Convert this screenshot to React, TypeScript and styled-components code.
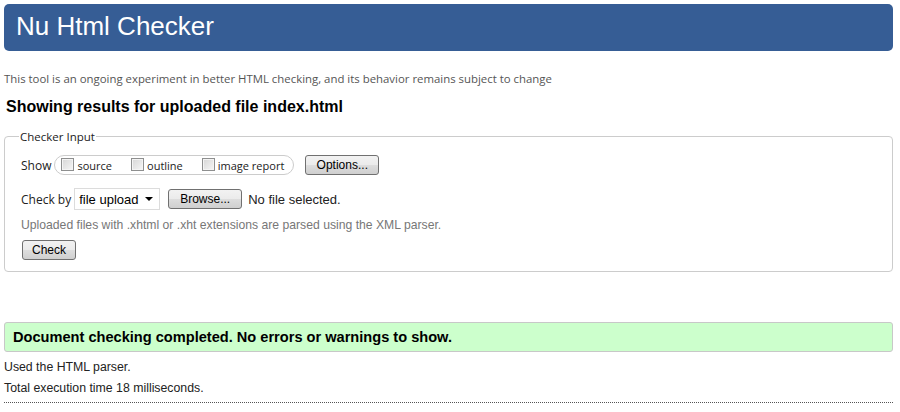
import React from "react";
import styled, { createGlobalStyle } from "styled-components";

const Global = createGlobalStyle`
  html, body { margin: 0; padding: 0; background: #fff; }
  body { font-family: "Liberation Sans", Arial, sans-serif; color: #000; }
`;

const Page = styled.div`
  padding: 4px 7px 0 4px;
  display: flex;
  flex-direction: column;
`;

const Header = styled.h1`
  margin: 0;
  height: 47px;
  background: #365d95;
  border-radius: 5px;
  color: #fff;
  font: 400 26px "Liberation Sans", Arial, sans-serif;
  display: flex;
  align-items: center;
  padding: 0 0 2px 12px;
  box-sizing: border-box;
`;

const Notice = styled.p`
  margin: 20px 0 0 0;
  font: 400 11.4px "Open Sans", sans-serif;
  color: #555;
  line-height: 16px;
`;

const Title = styled.h2`
  margin: 10px 0 0 2px;
  font: 700 16px "Liberation Sans", Arial, sans-serif;
  line-height: 20px;
`;

const Fieldset = styled.fieldset`
  margin: 12px 0 0 0;
  border: 1px solid #ccc;
  border-radius: 4px;
  padding: 4px 16px 11px 16px;
  display: flex;
  flex-direction: column;
`;

const Legend = styled.legend`
  font: 400 11.5px "Open Sans", sans-serif;
  color: #222;
  padding: 0 1px;
  margin-left: -2px;
`;

const Row = styled.div<{ $mt?: number }>`
  display: flex;
  align-items: center;
  margin-top: ${(p) => p.$mt ?? 0}px;
  font-size: 12px;
`;

const Label = styled.span<{ $font?: string; $ml?: number; $size?: number }>`
  font: 400 ${(p) => p.$size ?? 12}px ${(p) => p.$font ?? `"Liberation Sans", Arial, sans-serif`};
  color: #222;
  margin-left: ${(p) => p.$ml ?? 0}px;
`;

const Pill = styled.div`
  display: flex;
  align-items: center;
  gap: 19px;
  margin-left: 3px;
  height: 20px;
  padding: 0 9px 0 6px;
  border: 1px solid #ccc;
  border-radius: 10px;
  box-sizing: border-box;
`;

const CheckItem = styled.label`
  display: flex;
  align-items: center;
  gap: 3px;
  font: 400 11px "Open Sans", sans-serif;
  color: #222;
`;

const Box = styled.span`
  width: 13px;
  height: 13px;
  border: 1px solid #8e8f8f;
  background: linear-gradient(135deg, #d6d6d6, #f6f6f6);
  box-shadow: inset 0 0 0 1px #f4f4f4;
  box-sizing: border-box;
  display: inline-block;
  margin-bottom: 2px;
`;

const Button = styled.button<{ $w: number; $ml?: number }>`
  width: ${(p) => p.$w}px;
  height: 20px;
  margin-left: ${(p) => p.$ml ?? 0}px;
  padding: 0;
  border: 1px solid #707070;
  border-radius: 3px;
  background: linear-gradient(#f2f2f2 0%, #ebebeb 50%, #dddddd 51%, #cfcfcf 100%);
  font: 400 12px "Liberation Sans", Arial, sans-serif;
  color: #000;
  box-sizing: border-box;
`;

const Select = styled.div`
  width: 86px;
  height: 22px;
  margin-left: 3px;
  border: 1px solid #dcdcdc;
  box-sizing: border-box;
  display: flex;
  align-items: center;
  justify-content: space-between;
  padding: 0 6px 0 4px;
  font: 400 13px "Liberation Sans", Arial, sans-serif;
  color: #000;
`;

const Caret = styled.span`
  width: 0;
  height: 0;
  border-left: 4px solid transparent;
  border-right: 4px solid transparent;
  border-top: 4px solid #000;
`;

const Hint = styled.p`
  margin: 7px 0 0 0;
  font: 400 12.2px "Liberation Sans", Arial, sans-serif;
  color: #777;
  line-height: 16px;
`;

const Success = styled.div`
  margin-top: 50px;
  height: 30px;
  box-sizing: border-box;
  background: #ccffcc;
  border: 1px solid #c8c8c8;
  border-radius: 3px;
  display: flex;
  align-items: center;
  padding-left: 8px;
  font: 700 14.6px "Liberation Sans", Arial, sans-serif;
`;

const Info = styled.p<{ $mt: number }>`
  margin: ${(p) => p.$mt}px 0 0 0;
  font: 400 12.3px "Liberation Sans", Arial, sans-serif;
  color: #222;
  line-height: 15px;
`;

const Rule = styled.hr`
  margin: 6px 0 0 0;
  border: 0;
  border-top: 1px dotted #555;
`;

export default function App() {
  return (
    <Page>
      <Global />
      <Header>Nu Html Checker</Header>
      <Notice>
        This tool is an ongoing experiment in better HTML checking, and its behavior remains subject to change
      </Notice>
      <Title>Showing results for uploaded file index.html</Title>
      <Fieldset>
        <Legend>Checker Input</Legend>
        <Row $mt={7}>
          <Label $font={`"Open Sans", sans-serif`}>Show</Label>
          <Pill>
            <CheckItem>
              <Box />
              source
            </CheckItem>
            <CheckItem>
              <Box />
              outline
            </CheckItem>
            <CheckItem>
              <Box />
              image report
            </CheckItem>
          </Pill>
          <Button $w={74} $ml={11}>Options...</Button>
        </Row>
        <Row $mt={13}>
          <Label $font={`"Open Sans", sans-serif`}>Check by</Label>
          <Select>
            file upload
            <Caret />
          </Select>
          <Button $w={74} $ml={8}>Browse...</Button>
          <Label $ml={6} $size={13}>No file selected.</Label>
        </Row>
        <Hint>Uploaded files with .xhtml or .xht extensions are parsed using the XML parser.</Hint>
        <Row $mt={7}>
          <Button $w={54} $ml={1}>Check</Button>
        </Row>
      </Fieldset>
      <Success>Document checking completed. No errors or warnings to show.</Success>
      <Info $mt={8}>Used the HTML parser.</Info>
      <Info $mt={6}>Total execution time 18 milliseconds.</Info>
      <Rule />
    </Page>
  );
}
